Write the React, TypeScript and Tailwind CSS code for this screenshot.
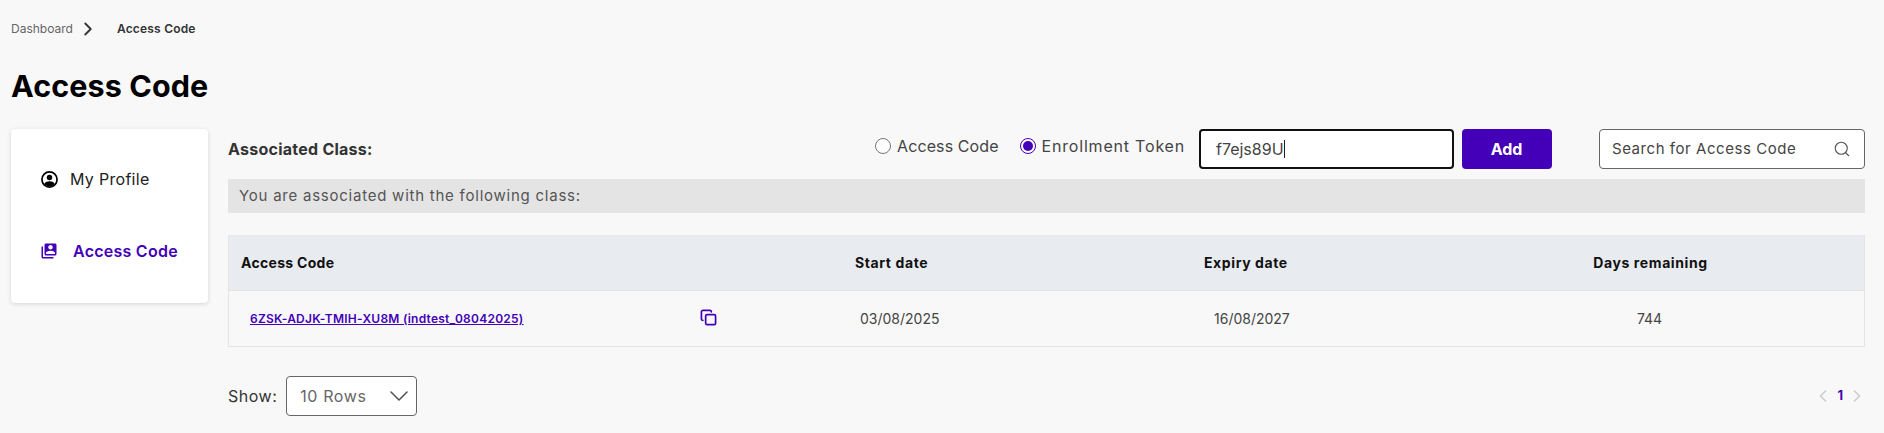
import { ChevronDown, ChevronLeft, ChevronRight, Copy, Search } from "lucide-react";
import { MdSwitchAccount } from "react-icons/md";

const row = "grid grid-cols-[472px_154px_348px_229px_1fr] items-center";

function ProfileIcon() {
  return (
    <svg viewBox="0 0 20 20" className="h-[17px] w-[17px] text-black" fill="currentColor">
      <circle cx="10" cy="10" r="8.9" fill="none" stroke="currentColor" strokeWidth="2" />
      <circle cx="10" cy="7.6" r="3.2" />
      <path d="M3.9 15.2C5.2 13 7.5 12.2 10 12.2s4.8.8 6.1 3C14.6 17 12.4 18 10 18s-4.6-1-6.1-2.8z" />
    </svg>
  );
}

export default function App() {
  return (
    <div className="min-h-[433px] bg-[#f8f8f8] pt-[21px] pl-[11px] pr-[19px] font-['Inter',sans-serif] text-[#333]">
      {/* Breadcrumb */}
      <div className="flex h-4 items-center text-[12px]">
        <span className="text-[#666]">Dashboard</span>
        <ChevronRight className="ml-1 h-[22px] w-[22px] text-[#333]" strokeWidth={2} />
        <span className="ml-[18px] font-semibold tracking-[0.2px] text-[#333]">Access Code</span>
      </div>

      <h1 className="mt-[31px] text-[30.5px] leading-[36px] font-bold tracking-[0.1px] text-black">Access Code</h1>

      <div className="mt-[25px] flex gap-5">
        {/* Side menu */}
        <aside className="flex h-[174px] w-[197px] shrink-0 flex-col gap-[50px] rounded bg-white pt-[39px] pl-[30px] shadow-[0_1px_4px_rgba(0,0,0,0.15)]">
          <div className="flex h-[22px] items-center text-[16px] text-[#222]">
            <ProfileIcon />
            <span className="ml-[12px] tracking-[0.3px]">My Profile</span>
          </div>
          <div className="-ml-px flex h-[22px] items-center text-[16px] font-semibold text-[#4300b8]">
            <MdSwitchAccount className="h-[18px] w-[18px]" />
            <span className="ml-[15px] tracking-[0.25px]">Access Code</span>
          </div>
        </aside>

        <main className="min-w-0 flex-1">
          {/* Toolbar */}
          <div className="flex h-10 items-center">
            <span className="text-[16px] font-bold tracking-[0.25px] text-[#333]">Associated Class:</span>
            <div className="ml-auto flex items-center">
              <label className="mb-[6px] flex items-center text-[16px] text-[#444]">
                <span className="h-4 w-4 rounded-full border border-[#777] bg-white" />
                <span className="ml-[6px] tracking-[0.1px]">Access Code</span>
              </label>
              <label className="mb-[6px] ml-[21px] flex items-center text-[16px] text-[#444]">
                <span className="flex h-4 w-4 items-center justify-center rounded-full border border-[#4300b8] bg-white">
                  <span className="h-[10px] w-[10px] rounded-full bg-[#4300b8]" />
                </span>
                <span className="ml-[6px] tracking-[0.8px]">Enrollment Token</span>
              </label>
              <div className="ml-[14px] flex h-10 w-[255px] items-center rounded border-2 border-[#111] bg-white pl-[15px] text-[16px] text-[#444]">
                f7ejs89U<span className="h-[18px] w-px bg-[#222]" />
              </div>
              <button className="ml-2 h-10 w-[90px] rounded bg-[#4300b8] pr-px text-[16px] font-bold text-white">Add</button>
              <div className="ml-[47px] flex h-10 w-[266px] items-center justify-between rounded border border-[#666] bg-white pr-[13px] pl-3 text-[15px] tracking-[0.55px] text-[#444]">
                <span>Search for Access Code</span>
                <Search className="h-[18px] w-[18px] text-[#555]" strokeWidth={1.5} />
              </div>
            </div>
          </div>

          <div className="mt-[10px] flex h-[34px] items-center bg-[#e4e4e4] pl-[11px] text-[15px] tracking-[0.76px] text-[#555]">
            You are associated with the following class:
          </div>

          {/* Access code table */}
          <div className="mt-[22px] border-x border-b border-[#e4e4e4]">
            <div className={`${row} h-[56px] border-b border-[#dfe2e6] bg-[#e8ebf0] text-[14px] font-bold text-[#111]`}>
              <span className="pl-3 tracking-[0.3px]">Access Code</span>
              <span />
              <span className="tracking-[0.6px]">Start date</span>
              <span className="pl-px tracking-[0.6px]">Expiry date</span>
              <span className="pl-[5px] text-center tracking-[0.6px]">Days remaining</span>
            </div>
            <div className={`${row} h-[55px] text-[14px] text-[#444]`}>
              <a className="pl-[21px] text-[12px] font-semibold tracking-[0.25px] text-[#4300b8] underline">6ZSK-ADJK-TMIH-XU8M (indtest_08042025)</a>
              <Copy className="-mt-[2px] -ml-px h-[17px] w-[17px] text-[#4300b8]" strokeWidth={2.4} />
              <span className="pl-[5px]">03/08/2025</span>
              <span className="pl-[11px]">16/08/2027</span>
              <span className="pl-[3px] text-center">744</span>
            </div>
          </div>

          {/* Pagination */}
          <div className="mt-[29px] flex items-center justify-between">
            <div className="flex items-center">
              <span className="text-[16px] tracking-[0.5px] text-[#333]">Show:</span>
              <div className="ml-[9px] flex h-10 w-[131px] items-center justify-between rounded border border-[#666] bg-white pr-px pl-[13px] text-[16px] tracking-[0.6px] text-[#666]">
                10 Rows
                <ChevronDown className="h-8 w-8 text-[#555]" strokeWidth={1.2} />
              </div>
            </div>
            <div className="-mr-[2px] flex items-center text-[13px] font-bold text-[#4300b8]">
              <ChevronLeft className="h-5 w-5 text-[#ccc]" strokeWidth={2} />
              <span className="mx-1">1</span>
              <ChevronRight className="h-5 w-5 text-[#ccc]" strokeWidth={2} />
            </div>
          </div>
        </main>
      </div>
    </div>
  );
}
